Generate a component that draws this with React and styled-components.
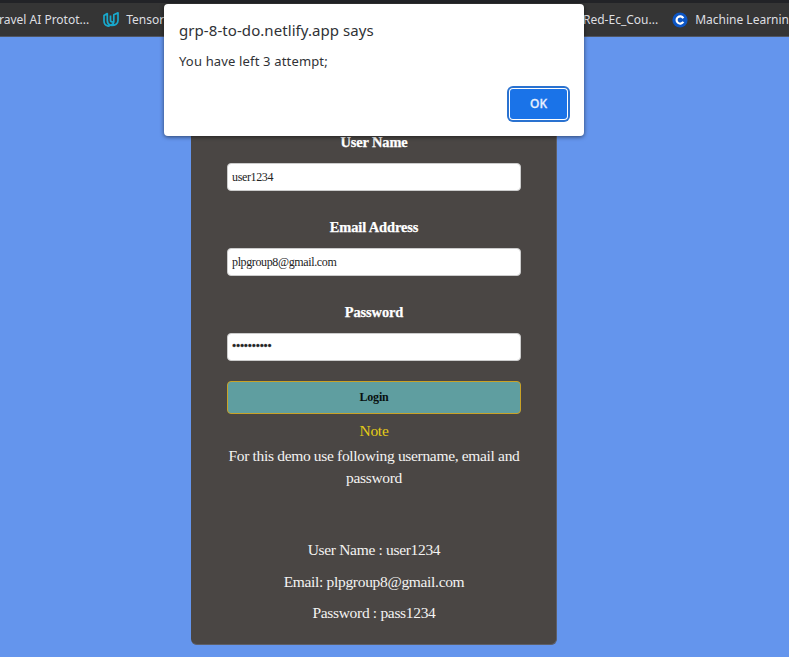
import React from 'react';
import styled, { createGlobalStyle } from 'styled-components';

const GlobalStyle = createGlobalStyle`
  * { box-sizing: border-box; }
  html, body { margin: 0; padding: 0; overflow: hidden; }
  body { background: #6495ed; }
`;

const Window = styled.div`
  position: relative;
  width: 789px;
  height: 657px;
  overflow: hidden;
  display: flex;
  flex-direction: column;
  background: #6495ed;
`;

const BookmarksBar = styled.header`
  flex: none;
  height: 37px;
  display: flex;
  justify-content: space-between;
  border-top: 3px solid #222327;
  border-bottom: 1px solid #4f5563;
  background: #353535;
  color: #dedfe1;
  font: 12px/32px "Noto Sans", sans-serif;
  white-space: nowrap;
`;

const BookmarkGroup = styled.div`
  display: flex;
  align-items: center;
  gap: ${(p) => p.$gap}px;
  margin-left: ${(p) => p.$offset || 0}px;
  width: ${(p) => p.$width}px;
`;

const Bookmark = styled.span`
  display: flex;
  flex: none;
  align-items: center;
  gap: 7px;
`;

const Page = styled.main`
  flex: 1;
  display: flex;
  justify-content: center;
  align-items: flex-end;
  padding: 0 41px 12px 0;
`;

const Card = styled.section`
  width: 366px;
  height: 575px;
  padding: 61px 35px 0 36px;
  border-radius: 6px;
  background: #4a4644;
  border: 1px solid #5d5f68;
  border-width: 0 1px 1px 0;
  color: #f4f3f2;
  font-family: "Liberation Serif", serif;
  text-align: center;
`;

const Form = styled.form`
  display: flex;
  flex-direction: column;
  width: 294px;
`;

const Field = styled.label`
  display: flex;
  flex-direction: column;
  gap: 10px;
  margin-bottom: ${(p) => (p.$last ? 20 : 25)}px;
  color: #fff;
  font-size: 14.4px;
  font-weight: 700;
  line-height: 22px;
  letter-spacing: -0.1px;
  -webkit-text-stroke: 0.25px #fff;
`;

const Input = styled.input`
  width: 294px;
  height: 28px;
  padding: ${(p) => (p.type === 'password' ? '0 4px 2px' : '0 4px')};
  border: 1px solid #ccc;
  border-radius: 4px;
  outline: 0;
  background: #fff;
  color: #222;
  font: 12px "Liberation Serif", serif;
  letter-spacing: ${(p) => (p.type === 'password' ? -0.25 : -0.37)}px;
  -webkit-text-stroke: ${(p) => (p.type === 'password' ? '0.3px #111' : '0')};
`;

const LoginButton = styled.button`
  height: 33px;
  padding: 0;
  border: 1px solid #c9a227;
  border-radius: 4px;
  background: #5f9ea0;
  color: #08100f;
  font: 700 12px "Liberation Serif", serif;
  letter-spacing: -0.2px;
`;

const Note = styled.h2`
  margin: 6px 0 3px;
  color: #e5cb17;
  font-size: 15.5px;
  font-weight: 400;
  line-height: 22px;
  letter-spacing: -0.3px;
`;

const Hint = styled.p`
  width: 294px;
  margin: 0;
  font-size: 15.5px;
  line-height: 22px;
  letter-spacing: -0.33px;
`;

const Credentials = styled.div`
  display: flex;
  flex-direction: column;
  gap: 9.5px;
  margin-top: 50px;
  font-size: 15.5px;
  line-height: 22px;
  letter-spacing: -0.32px;
`;

const Dialog = styled.section`
  position: absolute;
  top: 4px;
  left: 164px;
  width: 420px;
  height: 132px;
  padding: 15px 15px 0;
  display: flex;
  flex-direction: column;
  border-radius: 4px;
  background: #fff;
  box-shadow: 0 1px 4px rgba(0, 0, 0, 0.55);
  color: #303236;
  font-family: "Noto Sans", sans-serif;
`;

const DialogTitle = styled.h1`
  margin: 0;
  font-size: 15px;
  font-weight: 400;
  line-height: 22px;
  letter-spacing: 0.07px;
`;

const DialogMessage = styled.p`
  margin: 10px 0 0;
  font-size: 13px;
  line-height: 20px;
  letter-spacing: 0.16px;
`;

const OkButton = styled.button`
  align-self: flex-end;
  width: 57px;
  height: 30px;
  margin: 18px 2px 0 0;
  padding: 0 0 1px;
  border: 0;
  border-radius: 3px;
  background: #1a73e8;
  box-shadow: 0 0 0 1px #fff, 0 0 0 3px #2a72d0;
  color: #e8f0fe;
  font: 500 12px "Noto Sans", sans-serif;
  -webkit-text-stroke: 0.3px #e8f0fe;
`;

const fields = [
  { label: 'User Name', type: 'text', value: 'user1234' },
  { label: 'Email Address', type: 'text', value: 'plpgroup8@gmail.com' },
  { label: 'Password', type: 'password', value: 'pass123456' },
];

const UdacityIcon = () => (
  <svg width="16" height="16" viewBox="0 0 16 16" fill="none" stroke="#18a9cd" strokeWidth="1.7" strokeLinejoin="round">
    <path d="M1 3.600 4.300 1.600V8.500c0 2.400 1.200 4 3.200 4.700-.8.700-1.800 1-2.800.7C2.300 13.300 1 11.400 1 8.700Z" />
    <path d="M7.500 3.600v4.700c0 1.200.9 1.900 2.800 1.900M10.800 2.700 15 .9v7.600c0 3.100-2.600 5.200-7.500 4.700 2.100-.6 3.300-2 3.300-3.600Z" />
  </svg>
);

const CourseraIcon = () => (
  <svg width="16" height="16" viewBox="0 0 16 16">
    <circle cx="8" cy="8" r="7.600" fill="#0c55c4" />
    <path d="M11.300 6.200A3.600 3.600 0 1 0 11.300 9.800" fill="none" stroke="#fff" strokeWidth="2.200" />
  </svg>
);

export default function App() {
  return (
    <Window>
      <GlobalStyle />
      <BookmarksBar>
        <BookmarkGroup $gap={14} $offset={-1} $width={170}>
          <Bookmark>ravel AI Protot...</Bookmark>
          <Bookmark><UdacityIcon />Tensor</Bookmark>
        </BookmarkGroup>
        <BookmarkGroup $gap={14} $width={206}>
          <Bookmark>Red-Ec_Cou...</Bookmark>
          <Bookmark><CourseraIcon />Machine Learnin</Bookmark>
        </BookmarkGroup>
      </BookmarksBar>
      <Page>
        <Card>
          <Form>
            {fields.map((f, i) => (
              <Field key={f.label} $last={i === fields.length - 1}>
                {f.label}
                <Input type={f.type} defaultValue={f.value} />
              </Field>
            ))}
            <LoginButton type="button">Login</LoginButton>
          </Form>
          <Note>Note</Note>
          <Hint>For this demo use following username, email and password</Hint>
          <Credentials>
            <span>User Name : user1234</span>
            <span>Email: plpgroup8@gmail.com</span>
            <span>Password : pass1234</span>
          </Credentials>
        </Card>
      </Page>
      <Dialog role="alertdialog">
        <DialogTitle>grp-8-to-do.netlify.app says</DialogTitle>
        <DialogMessage>You have left 3 attempt;</DialogMessage>
        <OkButton>OK</OkButton>
      </Dialog>
    </Window>
  );
}
